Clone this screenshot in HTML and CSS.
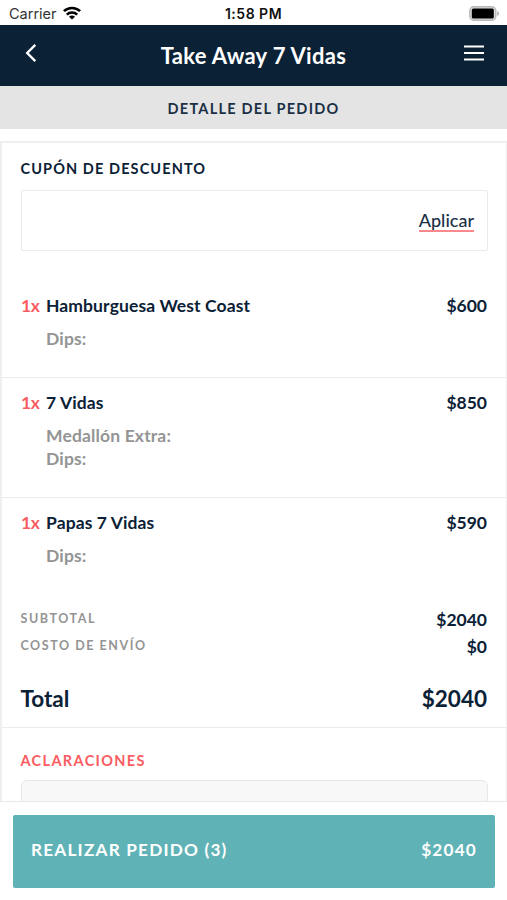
FILE: index.html
```html
<!DOCTYPE html>
<html lang="es">
<head>
<meta charset="utf-8">
<title>Take Away 7 Vidas</title>
<link rel="stylesheet" href="styles.css">
</head>
<body>
<div class="status">
  <div class="carrier"><span class="carrier-name">Carrier</span>
    <svg class="wifi" width="18" height="14" viewBox="0 0 18 14" fill="none" stroke="#000" stroke-width="2.5"><path d="M.9 5.2a11.6 11.6 0 0 1 16.2 0"/><path d="M3.8 8.6a7.4 7.4 0 0 1 10.4 0"/><path d="M9 13.6 6 10.8a4.2 4.2 0 0 1 6 0z" fill="#000" stroke="none"/></svg>
  </div>
  <div class="time">1:58 PM</div>
  <svg class="battery" width="31" height="15" viewBox="0 0 31 15"><rect x=".8" y=".8" width="26" height="13.4" rx="4" fill="#ddd" stroke="#b8b8b8" stroke-width="1.4"/><rect x="2.8" y="2.6" width="22" height="9.8" rx="1.5" fill="#000"/><path d="M28.3 5.2c2.3.6 2.3 4 0 4.6z" fill="#aaa"/></svg>
</div>
<header class="header">
  <svg class="back" width="12" height="20" viewBox="0 0 12 20" fill="none" stroke="#fff" stroke-width="2.4"><path d="M10.3 1.8 2.2 10l8.1 8.2"/></svg>
  <h1 class="title">Take Away 7 Vidas</h1>
  <svg class="menu" width="20" height="16" viewBox="0 0 20 16" fill="none" stroke="#fff" stroke-width="2"><path d="M0 1.5h20M0 8h20M0 14.5h20"/></svg>
</header>
<div class="subheader">DETALLE DEL PEDIDO</div>
<main class="order">
  <section class="coupon">
    <h2 class="label">CUPÓN DE DESCUENTO</h2>
    <div class="coupon-field"><a class="apply">Aplicar</a></div>
  </section>
  <section class="item">
    <div class="item-row"><span class="qty">1x</span><span class="name">Hamburguesa West Coast</span><span class="price">$600</span></div>
    <div class="extras"><div>Dips:</div></div>
  </section>
  <section class="item">
    <div class="item-row"><span class="qty">1x</span><span class="name">7 Vidas</span><span class="price">$850</span></div>
    <div class="extras"><div>Medallón Extra:</div><div>Dips:</div></div>
  </section>
  <section class="item item-last">
    <div class="item-row"><span class="qty">1x</span><span class="name">Papas 7 Vidas</span><span class="price">$590</span></div>
    <div class="extras"><div>Dips:</div></div>
  </section>
  <section class="totals">
    <div class="sum"><span class="sum-label">SUBTOTAL</span><span class="price">$2040</span></div>
    <div class="sum"><span class="sum-label">COSTO DE ENVÍO</span><span class="price">$0</span></div>
    <div class="total"><span>Total</span><span>$2040</span></div>
  </section>
  <section class="notes">
    <h2 class="label label-red">ACLARACIONES</h2>
    <div class="notes-field"></div>
  </section>
</main>
<footer class="footer">
  <div class="checkout"><span>REALIZAR PEDIDO (3)</span><span>$2040</span></div>
</footer>
</body>
</html>
```
FILE: styles.css
```css
* { box-sizing: border-box; }
body {
  margin: 0;
  width: 507px;
  height: 900px;
  overflow: hidden;
  display: flex;
  flex-direction: column;
  background: #fff;
  color: #0b2136;
  font-family: Lato, "Liberation Sans", sans-serif;
}
h1, h2 { margin: 0; }
.status {
  flex: none;
  height: 25px;
  padding: 2px 7px 0 9px;
  display: grid;
  grid-template-columns: 1fr auto 1fr;
  align-items: center;
  color: #111;
  font: 14.5px/23px Inter, sans-serif;
}
.carrier { display: flex; align-items: center; gap: 6px; }
.carrier-name { color: #333; padding-top: 1px; line-height: 22px; }
.wifi { margin-top: -2px; }
.time { font-weight: 600; font-size: 14px; line-height: 22px; padding-top: 1px; letter-spacing: .5px; margin-right: 2px; }
.battery { justify-self: end; margin-top: -1px; }
.header {
  flex: none;
  height: 61px;
  padding: 0 23px 0 25px;
  display: grid;
  grid-template-columns: 1fr auto 1fr;
  align-items: center;
  background: #0b2136;
  color: #fff;
}
.back { margin-top: -5px; }
.menu { justify-self: end; margin-top: -5px; }
.title { font-size: 22px; font-weight: 700; line-height: 28px; letter-spacing: .3px; margin-right: 2px; }
.subheader {
  flex: none;
  height: 43px;
  line-height: 45px;
  text-align: center;
  background: #e4e4e4;
  color: #1c3045;
  font-size: 14.5px;
  font-weight: 700;
  letter-spacing: 1.25px;
}
.order {
  flex: 1;
  min-height: 0;
  overflow: hidden;
  margin-top: 12px;
  border: solid #efefef;
  border-width: 2px 1px 0 2px;
}
.coupon { padding: 15px 18px 0 18.5px; height: 144px; }
.label { font-size: 14.5px; line-height: 21px; font-weight: 700; letter-spacing: 1.1px; }
.coupon-field {
  height: 61px;
  margin-top: 11px;
  padding-right: 13px;
  border: 1px solid #ebebeb;
  border-radius: 2px;
  display: flex;
  align-items: center;
  justify-content: flex-end;
}
.apply { color: #1c3045; font-size: 18px; line-height: 20px; font-weight: 500; border-bottom: 2px solid #f9898d; }
.item { padding: 7px 19px 27px; border-bottom: 1px solid #ebebeb; }
.item + .item { padding-top: 13px; }
.item-row { display: flex; font-size: 17.5px; line-height: 24px; font-weight: 700; }
.qty { width: 25px; color: #fb5c62; letter-spacing: -.3px; }
.name { flex: 1; letter-spacing: .1px; }
.extras { margin: 9px 0 0 25px; color: #949494; font-size: 17.5px; line-height: 23px; font-weight: 700; letter-spacing: .15px; }
.item-last { border-bottom: 0; }
.totals { padding: 13px 19px 13px 18.5px; border-bottom: 1px solid #ebebeb; }
.sum { display: flex; justify-content: space-between; height: 27px; line-height: 25px; }
.sum-label { color: #949494; font-size: 12.5px; line-height: 24px; font-weight: 700; letter-spacing: 1.55px; }
.price { font-size: 17.5px; font-weight: 700; }
.total { display: flex; justify-content: space-between; margin-top: 23px; font-size: 22.5px; line-height: 30px; font-weight: 700; }
.notes { padding: 22px 18px 0 18.5px; }
.label-red { color: #fb5c62; letter-spacing: 1.35px; }
.notes-field { height: 100px; margin-top: 9px; border: 1px solid #e8e8e8; border-radius: 6px; background: #f8f8f8; }
.footer { flex: none; height: 99px; padding: 13px 12px 0 13px; border-top: 1px solid #e8e8e8; }
.checkout {
  height: 73px;
  padding: 0 18px 4px;
  display: flex;
  align-items: center;
  justify-content: space-between;
  border-radius: 2px;
  background: #5fb3b7;
  color: #fff;
  font-size: 17.2px;
  font-weight: 700;
  letter-spacing: 1.2px;
}
```
